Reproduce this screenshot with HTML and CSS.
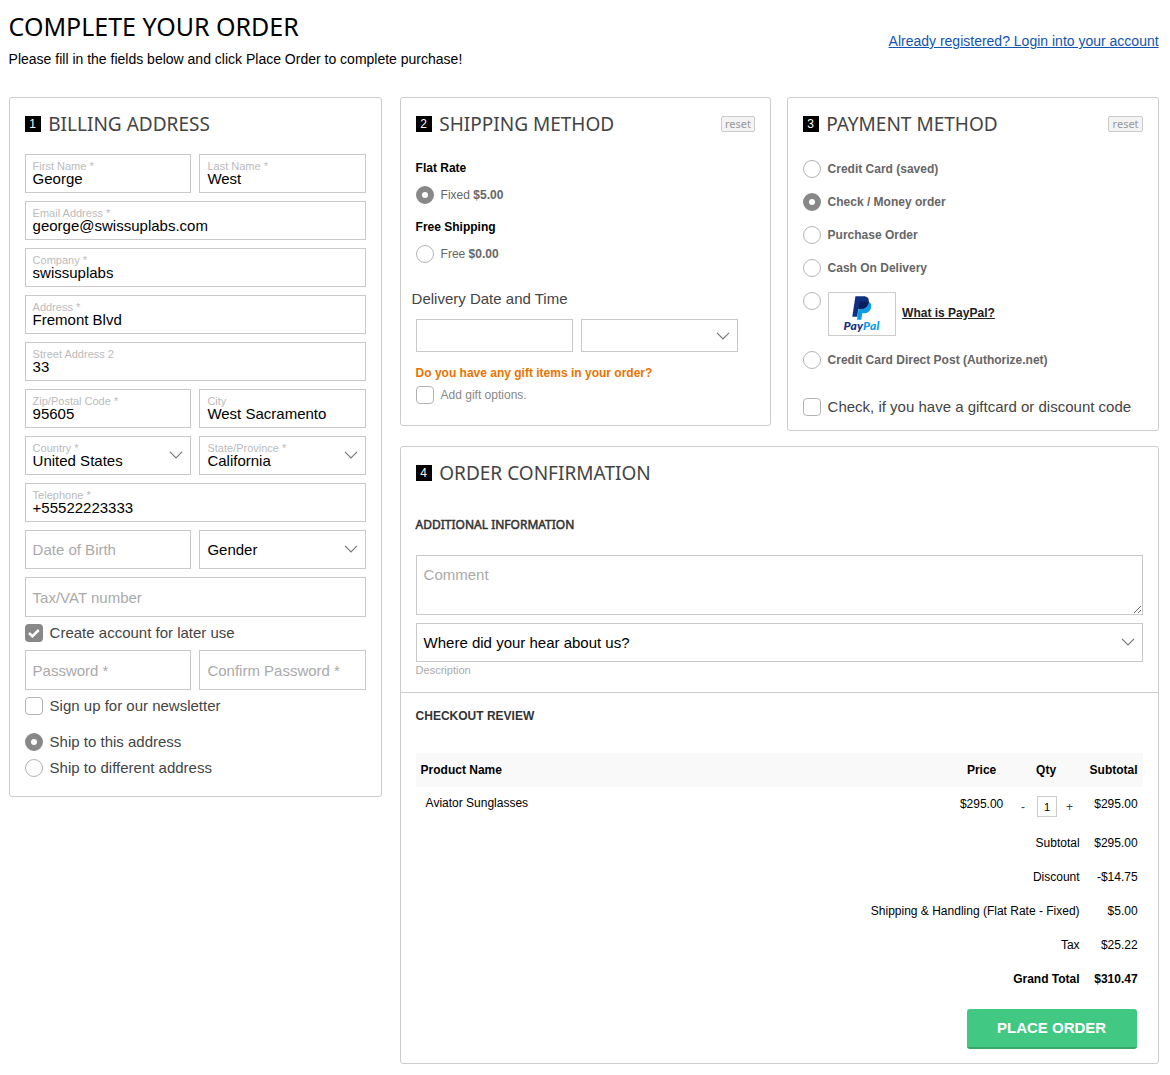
FILE: index.html
```html
<!DOCTYPE html>
<html lang="en">
<head>
<meta charset="utf-8">
<title>Complete your order</title>
<link rel="stylesheet" href="styles.css">
</head>
<body>
<svg class="defs" width="0" height="0">
  <symbol id="chevron" viewBox="0 0 14 8"><path d="M1 .8 7 6.8 13 .8" fill="none" stroke="#777" stroke-width="1.2"/></symbol>
</svg>
<div class="page">
  <header class="page-head">
    <div>
      <h1>COMPLETE YOUR ORDER</h1>
      <p>Please fill in the fields below and click Place Order to complete purchase!</p>
    </div>
    <a class="login" href="#">Already registered? Login into your account</a>
  </header>

  <main class="columns">
    <section class="card billing">
      <div class="card-title"><span class="num">1</span><h2>BILLING ADDRESS</h2></div>
      <div class="fields">
        <div class="field"><label>First Name *</label><span>George</span></div>
        <div class="field"><label>Last Name *</label><span>West</span></div>
        <div class="field wide"><label>Email Address *</label><span>george@swissuplabs.com</span></div>
        <div class="field wide"><label>Company *</label><span>swissuplabs</span></div>
        <div class="field wide"><label>Address *</label><span>Fremont Blvd</span></div>
        <div class="field wide"><label>Street Address 2</label><span>33</span></div>
        <div class="field"><label>Zip/Postal Code *</label><span>95605</span></div>
        <div class="field"><label>City</label><span>West Sacramento</span></div>
        <div class="field"><label>Country *</label><span>United States</span><svg class="chev"><use href="#chevron"/></svg></div>
        <div class="field"><label>State/Province *</label><span>California</span><svg class="chev"><use href="#chevron"/></svg></div>
        <div class="field wide"><label>Telephone *</label><span>+55522223333</span></div>
        <div class="field empty">Date of Birth</div>
        <div class="field single">Gender<svg class="chev"><use href="#chevron"/></svg></div>
        <div class="field wide empty tall">Tax/VAT number</div>
      </div>
      <div class="option create"><i class="check on"><svg viewBox="0 0 18 18"><path d="M4 9 7.400 12.300 13.700 6" fill="none" stroke="#fff" stroke-width="2.500"/></svg></i>Create account for later use</div>
      <div class="fields passwords">
        <div class="field empty tall">Password *</div>
        <div class="field empty tall">Confirm Password *</div>
      </div>
      <div class="option newsletter"><i class="check"></i>Sign up for our newsletter</div>
      <div class="option ship-same"><i class="radio on"></i>Ship to this address</div>
      <div class="option ship-other"><i class="radio"></i>Ship to different address</div>
    </section>

    <div class="right">
      <div class="methods">
        <section class="card shipping">
          <div class="card-title"><span class="num">2</span><h2>SHIPPING METHOD</h2><span class="reset">reset</span></div>
          <h3>Flat Rate</h3>
          <div class="option small"><i class="radio on"></i><span>Fixed <b>$5.00</b></span></div>
          <h3 class="second">Free Shipping</h3>
          <div class="option small"><i class="radio"></i><span>Free <b>$0.00</b></span></div>
          <div class="delivery-title">Delivery Date and Time</div>
          <div class="delivery">
            <div class="field"></div>
            <div class="field"><svg class="chev"><use href="#chevron"/></svg></div>
          </div>
          <div class="gift-question">Do you have any gift items in your order?</div>
          <div class="option small gift"><i class="check"></i>Add gift options.</div>
        </section>

        <section class="card payment">
          <div class="card-title"><span class="num">3</span><h2>PAYMENT METHOD</h2><span class="reset">reset</span></div>
          <div class="pay-list">
            <div class="option small"><i class="radio"></i><b>Credit Card (saved)</b></div>
            <div class="option small"><i class="radio on"></i><b>Check / Money order</b></div>
            <div class="option small"><i class="radio"></i><b>Purchase Order</b></div>
            <div class="option small"><i class="radio"></i><b>Cash On Delivery</b></div>
            <div class="option small paypal"><i class="radio"></i>
              <span class="pp-box">
                <svg class="pp-mark" viewBox="0 0 20 24"><path d="M7.500 6h9.500c2 1 2.700 2.800 2.200 5.300-.9 4.200-3.600 6-7.400 6h-1.500L9.300 23.700H5z" fill="#0d9be5"/><path d="M3.400.3h8c4.200 0 6 2.300 5.300 6-.9 4.600-3.800 6.600-8 6.600H6.300L5.200 20.700H.3z" fill="#10307f"/><path d="M7.700 5.600h8.900v1c-.9 4.300-3.700 6.300-7.900 6.300H6.500z" fill="#0b1d5c"/></svg>
                <span class="pp-word"><span>Pay</span><em>Pal</em></span>
              </span>
              <a href="#">What is PayPal?</a>
            </div>
            <div class="option small"><i class="radio"></i><b>Credit Card Direct Post (Authorize.net)</b></div>
          </div>
          <div class="option giftcard"><i class="check"></i>Check, if you have a giftcard or discount code</div>
        </section>
      </div>

      <section class="card order">
        <div class="order-top">
          <div class="card-title"><span class="num">4</span><h2>ORDER CONFIRMATION</h2></div>
          <h4 class="additional">ADDITIONAL INFORMATION</h4>
          <div class="comment">Comment</div>
          <div class="field single">Where did your hear about us?<svg class="chev"><use href="#chevron"/></svg></div>
          <div class="description">Description</div>
        </div>
        <div class="review">
          <h4>CHECKOUT REVIEW</h4>
          <div class="row head"><span>Product Name</span><span>Price</span><span>Qty</span><span>Subtotal</span></div>
          <div class="row item"><span>Aviator Sunglasses</span><span>$295.00</span><span class="qty"><span>-</span><span class="qty-box">1</span><span>+</span></span><span>$295.00</span></div>
          <div class="total"><span>Subtotal</span><span>$295.00</span></div>
          <div class="total"><span>Discount</span><span>-$14.75</span></div>
          <div class="total"><span>Shipping &amp; Handling (Flat Rate - Fixed)</span><span>$5.00</span></div>
          <div class="total"><span>Tax</span><span>$25.22</span></div>
          <div class="total grand"><span>Grand Total</span><span>$310.47</span></div>
          <button class="place">PLACE ORDER</button>
        </div>
      </section>
    </div>
  </main>
</div>
</body>
</html>
```

FILE: styles.css
```css
* { box-sizing: border-box; }
body {
  margin: 0;
  background: #fff;
  color: #000;
  font: 12px/16px "Liberation Sans", Arial, sans-serif;
}
h1, h2, h3, h4, p { margin: 0; font-weight: normal; }
.defs { display: block; }
.page { padding: 0 11.4px 0 8.6px; }

.page-head {
  display: flex;
  justify-content: space-between;
  height: 97px;
}
h1 { margin-top: 9px; font: 25px/34px "Noto Sans", sans-serif; }
.page-head p { margin-top: 8px; font-size: 14px; line-height: 16px; }
.login { margin-top: 33px; font-size: 14px; line-height: 16px; color: #1353af; }

.columns { display: flex; align-items: flex-start; gap: 18px; }
.card { border: 1px solid #ccc; border-radius: 3px; padding: 0 15px; background: #fff; }
.billing { width: 373px; height: 700px; }
.right { width: 759px; }
.methods { display: flex; align-items: flex-start; gap: 16px; height: 349px; }
.shipping { width: 371px; height: 329px; }
.payment { width: 372px; height: 334px; }
.order { height: 618px; padding: 0; }

.card-title { display: flex; align-items: center; height: 16px; margin-top: 18px; }
.num { width: 16px; height: 16px; margin-right: 7.6px; background: #000; color: #fff; font-size: 12px; line-height: 16px; text-align: center; }
h2 { font: 19.05px/26px "Noto Sans", sans-serif; color: #444; }
.reset {
  height: 16px;
  margin-left: auto;
  padding: 0 3px 0 3.3px;
  border: 1px solid #ccc;
  border-radius: 2px;
  background: #f3f3f3;
  color: #999;
  font: 11px/14px "Noto Sans", sans-serif;
}
.shipping .reset { padding-left: 3px; margin-right: -.4px; }

.fields { display: grid; grid-template-columns: 166.8px 166.8px; gap: 8px; margin-top: 22px; }
.field {
  position: relative;
  display: flex;
  flex-direction: column;
  height: 39px;
  padding: 6px 7px 0;
  border: 1px solid #c9c9c9;
  background: #fff;
  font-size: 15px;
  line-height: 16px;
}
.field label { font-size: 11px; line-height: 10px; color: #bbb; }
.wide { grid-column: span 2; }
.tall { height: 40px; }
.empty, .single { justify-content: center; padding-top: 0; line-height: 17px; }
.empty { color: #aaa; }
.chev { position: absolute; right: 7px; top: 14px; width: 14px; height: 8px; }

.option { display: flex; gap: 7px; height: 18px; font-size: 15px; line-height: 18px; color: #444; }
.small { font-size: 12px; color: #666; }
.check, .radio { flex: none; width: 18px; height: 18px; border: 1px solid #b4b4b4; border-radius: 4px; background: #fff; }
.radio { border-radius: 50%; }
.check.on { border: 0; background: #888; }
.check svg { display: block; width: 18px; height: 18px; }
.radio.on { border: 6px solid #888; }
.create { margin-top: 7px; }
.passwords { margin-top: 8px; }
.newsletter { margin-top: 7px; }
.ship-same { margin-top: 18px; }
.ship-other { margin-top: 8px; }

h3 { margin: 28px 0 10px; font-size: 12px; line-height: 16px; font-weight: bold; }
h3.second { margin-top: 15px; }
.delivery-title { margin: 27px 0 0 -4px; font-size: 15px; line-height: 18px; color: #444; }
.delivery { display: flex; gap: 8px; margin-top: 11px; }
.delivery .field { width: 157px; height: 33px; }
.delivery .chev { top: 12px; }
.gift-question { margin-top: 13px; font-weight: bold; color: #e87400; }
.gift { margin-top: 5px; color: #888; }

.pay-list { display: flex; flex-direction: column; gap: 15px; margin-top: 28px; }
.paypal { height: 44px; }
.pp-box { display: flex; flex-direction: column; align-items: center; width: 68px; height: 44px; padding-top: 3px; border: 1px solid #ccc; }
.pp-mark { flex: none; width: 20px; height: 24px; }
.pp-word { display: flex; margin-top: -1px; font: italic 900 12px/13px "Lato", sans-serif; letter-spacing: .2px; color: #10307f; }
.pp-word em { color: #0d9be5; }
.paypal a { margin: 12px 0 0 -.5px; font-weight: bold; color: #222; }
.giftcard { margin-top: 29px; }

.order-top { height: 246px; padding: 0 15px; border-bottom: 1px solid #ccc; display: flow-root; }
h4 { font-size: 12px; line-height: 16px; font-weight: bold; color: #333; }
h4.additional { margin-top: 36px; font: 400 12px/16px "Noto Sans", sans-serif; -webkit-text-stroke: .5px #333; }
.comment { height: 60px; margin: 22px 0 8px; padding: 10px 7px; border: 1px solid #c9c9c9; overflow: auto; resize: both; font-size: 15px; line-height: 18px; color: #aaa; }
.description { font-size: 11px; line-height: 16px; color: #aaa; }

.review { padding: 15px 15px 0; }
.row { display: grid; grid-template-columns: 1fr 52px 77px 58px; text-align: center; line-height: 34px; }
.row > :first-child { padding-left: 5px; text-align: left; }
.row > :last-child { padding-right: 5px; text-align: right; }
.head { height: 34px; margin-top: 29px; background: #f9f9f9; font-weight: bold; }
.item { height: 39px; }
.item > :first-child { padding-left: 10px; line-height: 32px; }
.qty { display: flex; justify-content: center; align-items: flex-start; gap: 9px; padding: 9px 0 0 2px; line-height: 22px; color: #444; }
.qty > :first-child { margin-right: 3px; }
.qty-box { width: 20px; height: 21px; border: 1px solid #ccc; font-size: 11px; line-height: 20px; color: #000; }
.total { display: grid; grid-template-columns: 1fr 58px; height: 34px; line-height: 34px; padding-right: 5px; text-align: right; }
.grand { font-weight: bold; }
.place {
  display: block;
  width: 170px;
  height: 40px;
  margin: 13px 6px 0 auto;
  padding: 0;
  border: 0;
  border-bottom: 2px solid #38a76c;
  border-radius: 3px;
  background: #41c983;
  color: #fff;
  font: bold 15px/38px "Liberation Sans", Arial, sans-serif;
}
```
